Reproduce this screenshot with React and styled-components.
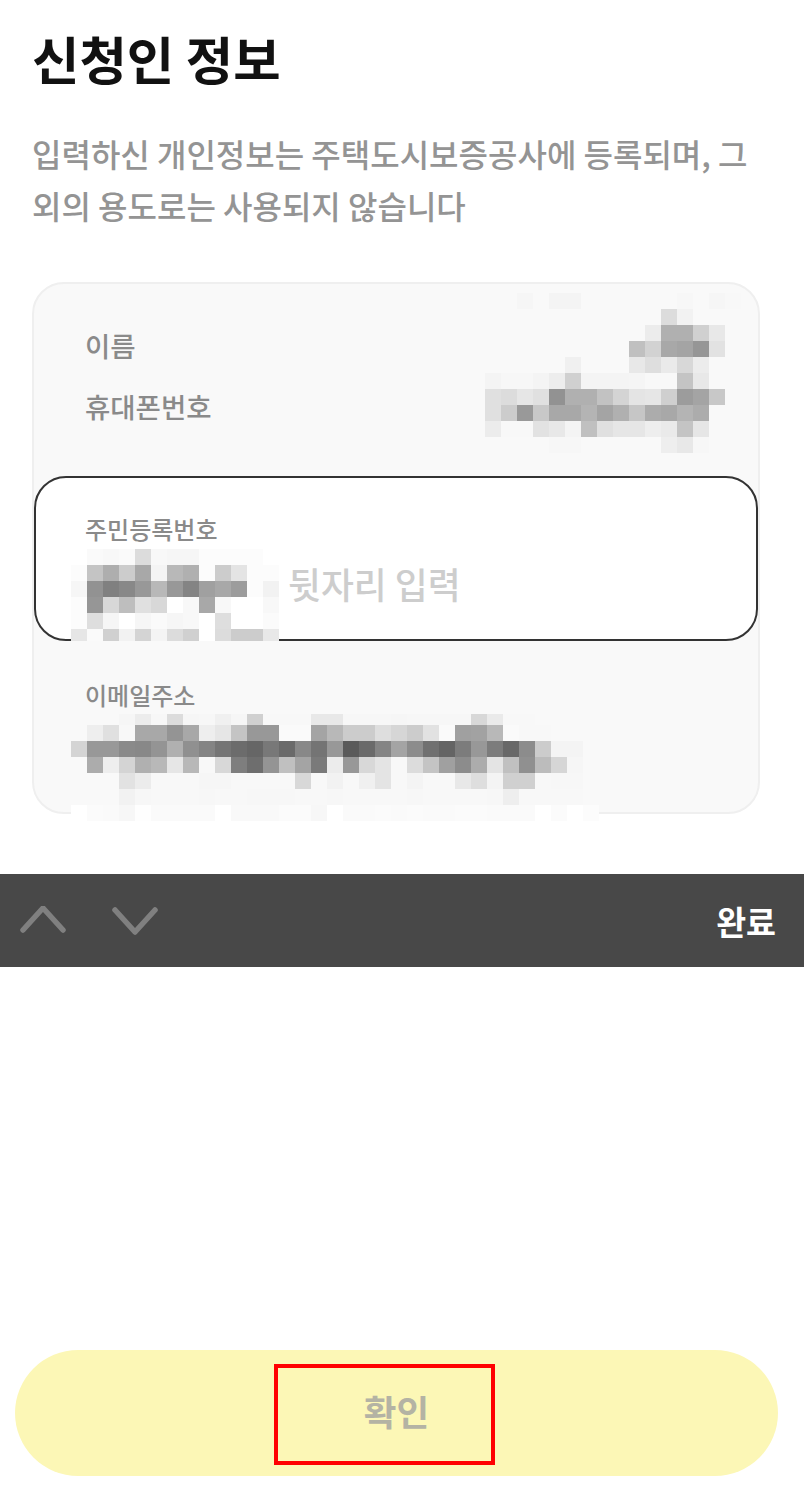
import styled, { createGlobalStyle } from "styled-components";

const GlobalStyle = createGlobalStyle`
    html, body {
        margin: 0;
        padding: 0;
        background: #fff;
    }
    * {
        box-sizing: border-box;
    }
`;

const FONT = `"Noto Sans CJK KR", "Noto Sans", sans-serif`;

// censored values in the reference, one token per 16px cell, -- is see-through
const NAME_BLUR = {
    clipTop: 8,
    rows: [
        "-- -- -- -- -- -- -- -- -- -- -- -- -- -- -- --",
        "-- -- f6 -- f4 f4 -- -- -- -- -- -- f7 -- f6 f8",
        "-- -- -- -- -- -- -- -- -- -- -- dc f2 -- -- --",
        "-- -- -- -- -- -- -- -- -- -- ec b0 b0 d0 e8 --",
        "-- -- -- -- -- -- -- -- -- c0 d2 a8 a4 96 e2 --",
        "-- -- -- -- -- f0 -- -- -- e8 de ea d8 ec -- --",
        "f4 f7 f7 f4 ed d0 f4 f4 f4 f5 f8 f8 c4 e8 -- --",
        "e0 dc e6 e0 92 b0 b0 c2 d4 e4 e6 cf 9c a4 c8 --",
        "e0 cc 99 c8 a8 a8 b4 a4 b0 c6 ac a8 b4 ac -- --",
        "ec f8 f8 e2 e8 f4 c0 e0 e6 e6 ee ea c4 e6 -- --",
        "-- -- -- -- f7 f7 -- -- -- -- -- ee e8 f7 -- --",
    ],
};

const RRN_BLUR = {
    clipBottom: 4,
    rows: [
        "-- fa f8 fa dc f8 f6 f6 fc fc fc fc --",
        "fc c4 ae cc a8 f4 b8 b0 fc cc e4 fc fc",
        "f6 92 80 88 98 b8 98 84 a0 a8 9c fc f2",
        "fc 96 d8 be e0 d8 ff f8 a8 f8 ff ff f8",
        "fc de f6 ff f6 fa f6 f8 ff de ff ff fb",
        "e6 fa d0 f2 d4 f4 dc d0 ff dc cc cc e8",
    ],
};

const EMAIL_BLUR = {
    clipTop: 5,
    rows: [
        "-- -- -- f6 ec f7 dc f6 f7 f0 f6 d0 f8 f8 f8 e8 e8 f7 f7 f7 f6 f7 f7 f7 f7 d8 ea f8 f8 -- -- -- -- --",
        "-- ee e0 f8 a8 a8 94 a8 ee e6 c4 98 98 fa fa a4 b8 cc cc de d6 cc e2 fa a0 a2 b8 fa f8 f8 -- -- -- --",
        "d4 98 98 8a 88 94 b0 90 84 75 6c 66 78 6a 88 74 98 5a 6a 84 a4 8c 70 64 7c 98 7c 68 8c cc f4 f4 -- --",
        "-- ac ee d4 b0 b8 e6 b8 f8 d8 7e 6e 94 c0 a4 7a ec 98 d8 e4 f8 dc c4 a0 8c ac e4 c0 90 bc d6 f6 -- --",
        "-- -- -- e2 ec f8 f8 f8 f6 f6 f8 f8 f8 f8 d8 f8 f2 f8 f0 e4 f8 f4 f8 f8 e8 de f4 d0 d0 f8 f7 f7 -- --",
        "-- -- -- f2 f7 f8 f8 f8 f7 f8 f8 f7 f7 f7 f8 f8 f7 f8 f8 f8 f8 f7 f8 f8 f8 f8 f7 ee f8 f8 f8 f8 -- --",
        "ff fb fa f7 fe fa fa fa fa ff f9 f9 f9 fb fb f7 ff fa fa fb fa fb fa fa fb fb fa fa fa ff fb ff fc --",
    ],
};

const Page = styled.div`
    position: relative;
    display: flex;
    flex-direction: column;
    width: 804px;
    height: 1490px;
    overflow: hidden;
    background: #fff;
    font-family: ${FONT};
`;

const Intro = styled.header`
    padding: 23px 32px 0;
    height: 282px;
`;

const Title = styled.h1`
    margin: 0;
    font-size: 51.5px;
    line-height: 70px;
    font-weight: 700;
    color: #111;
`;

const Desc = styled.p`
    margin: 35px 0 0;
    width: 730px;
    font-size: 32px;
    line-height: 51.5px;
    font-weight: 500;
    color: #949494;
    word-break: keep-all;
`;

const Card = styled.section`
    margin-left: 32px;
    width: 728px;
    height: 532px;
    border: 2px solid #efefef;
    border-radius: 32px;
    background: #f9f9f9;
    position: relative;
`;

const StaticRows = styled.div`
    display: flex;
    flex-direction: column;
    gap: 20px;
    height: 192px;
    padding: 41px 0 0 51px;
`;

const RowLabel = styled.div`
    font-size: 27.5px;
    line-height: 41px;
    font-weight: 500;
    color: #8a8a8a;
`;

const Field = styled.div`
    position: relative;
    height: ${props => props.$height}px;
    padding: ${props => props.$paddingTop}px 0 0 ${props => props.$paddingLeft}px;
    border: ${props => props.$active ? "2px solid #333" : "none"};
    border-radius: 32px;
    background: ${props => props.$active ? "#fff" : "transparent"};
`;

const FieldLabel = styled.div`
    font-size: 24px;
    line-height: 36px;
    font-weight: 500;
    color: #8a8a8a;
`;

const Placeholder = styled.div`
    margin: 12px 0 0 203px;
    font-size: 35.8px;
    line-height: 48px;
    font-weight: 500;
    color: #cdcdcd;
`;

const BlurLayer = styled.svg`
    position: absolute;
    left: ${props => props.$left}px;
    top: ${props => props.$top}px;
    display: block;
    filter: blur(0.4px);
`;

function Mosaic({ left, top, rows, clipTop = 0, clipBottom = 0 }) {
    const cols = rows[0].split(" ").length;
    const width = cols * 16;
    const height = rows.length * 16 - clipTop - clipBottom;
    return (
        <BlurLayer
            $left={left}
            $top={top}
            width={width}
            height={height}
            viewBox={`0 ${clipTop} ${width} ${height}`}
            shapeRendering="crispEdges"
        >
            {rows.map((row, y) =>
                row.split(" ").map((v, x) =>
                    v === "--" ? null : (
                        <rect key={`${x}-${y}`} x={x * 16} y={y * 16} width="16" height="16" fill={`#${v}${v}${v}`} />
                    )
                )
            )}
        </BlurLayer>
    );
}

const KeyboardBar = styled.div`
    display: flex;
    align-items: center;
    justify-content: space-between;
    margin-top: 60px;
    height: 93px;
    padding: 0 28px 0 20px;
    background: #484848;
`;

const ArrowGroup = styled.div`
    display: flex;
    gap: 46px;
`;

const Arrow = styled.svg`
    display: block;
    width: 46px;
    height: 30px;
    fill: none;
    stroke: #808080;
    stroke-width: 5.5;
    stroke-linecap: round;
    stroke-linejoin: round;
`;

const Done = styled.span`
    font-size: 32.5px;
    line-height: 44px;
    font-weight: 700;
    color: #fff;
`;

const Footer = styled.div`
    flex: 1;
    display: flex;
    align-items: flex-end;
    padding: 0 26px 14px 15px;
`;

const ConfirmButton = styled.button`
    width: 763px;
    height: 126px;
    padding: 0 0 5px;
    border: none;
    border-radius: 63px;
    background: #fcf7b6;
    font-family: ${FONT};
    font-size: 35.5px;
    font-weight: 700;
    color: #b4b3a4;
`;

const Highlight = styled.div`
    position: absolute;
    left: 274px;
    top: 1364px;
    width: 221px;
    height: 101px;
    border: 4px solid #ff0000;
`;

export default function App() {
    return (
        <Page>
            <GlobalStyle />
            <Intro>
                <Title>신청인 정보</Title>
                <Desc>입력하신 개인정보는 주택도시보증공사에 등록되며, 그 외의 용도로는 사용되지 않습니다</Desc>
            </Intro>
            <Card>
                <StaticRows>
                    <RowLabel>이름</RowLabel>
                    <RowLabel>휴대폰번호</RowLabel>
                </StaticRows>
                <Mosaic left={451} top={1} {...NAME_BLUR} />
                <Field $active $height={165} $paddingTop={33} $paddingLeft={49}>
                    <FieldLabel>주민등록번호</FieldLabel>
                    <Placeholder>뒷자리 입력</Placeholder>
                    <Mosaic left={35} top={71} {...RRN_BLUR} />
                </Field>
                <Field $height={171} $paddingTop={36} $paddingLeft={51}>
                    <FieldLabel>이메일주소</FieldLabel>
                    <Mosaic left={37} top={73} {...EMAIL_BLUR} />
                </Field>
            </Card>
            <KeyboardBar>
                <ArrowGroup>
                    <Arrow viewBox="0 0 46 30">
                        <path d="M3 24 L23 2 L43 24" />
                    </Arrow>
                    <Arrow viewBox="0 0 46 30">
                        <path d="M3 4 L23 26 L43 4" />
                    </Arrow>
                </ArrowGroup>
                <Done>완료</Done>
            </KeyboardBar>
            <Footer>
                <ConfirmButton>확인</ConfirmButton>
            </Footer>
            <Highlight />
        </Page>
    );
}
